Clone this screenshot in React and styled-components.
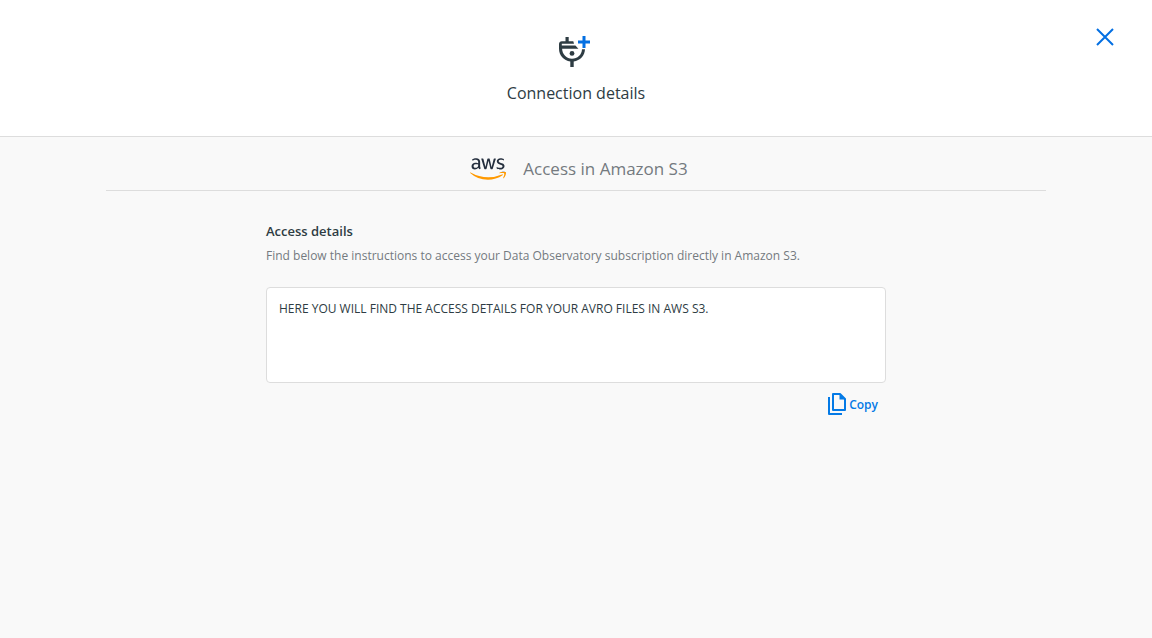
import React, { useRef } from "react";
import styled, { createGlobalStyle } from "styled-components";
import { FaAws } from "react-icons/fa";

const colors = {
  text: "#2e3c43",
  muted: "#747a7f",
  blue: "#036fe2",
  action: "#047ae6",
  border: "#dddddd",
  page: "#f9f9f9",
};

const GlobalStyle = createGlobalStyle`
  *, *::before, *::after { box-sizing: border-box; }
  body {
    margin: 0;
    background: ${colors.page};
    color: ${colors.text};
    font-family: "Open Sans", sans-serif;
  }
`;

const Header = styled.header`
  display: grid;
  grid-template-columns: 1fr auto 1fr;
  padding: 24px 36px 31px;
  background: #fff;
  border-bottom: 1px solid ${colors.border};
`;

const HeaderCenter = styled.div`
  grid-column: 2;
  display: flex;
  flex-direction: column;
  align-items: center;
  gap: 13px;
  padding-top: 12px;
`;

const Title = styled.h1`
  margin: 0;
  font-size: 16px;
  font-weight: 400;
  line-height: 24px;
`;

const CloseButton = styled.button`
  justify-self: end;
  align-self: start;
  display: flex;
  padding: 2px 0;
  border: 0;
  background: none;
  color: ${colors.blue};
  cursor: pointer;
`;

const Main = styled.main`
  max-width: 940px;
  margin: 0 auto;
`;

const Provider = styled.div`
  display: flex;
  align-items: center;
  justify-content: center;
  gap: 17px;
  height: 54px;
  padding: 10px 0 0 6px;
  border-bottom: 1px solid ${colors.border};
`;

const AwsLogo = styled(FaAws)`
  width: 36px;
  height: 30px;
  path { fill: url(#aws-colors); }
`;

const GradientDefs = styled.svg`
  position: absolute;
`;

const ProviderName = styled.h2`
  margin: 0;
  color: ${colors.muted};
  font-size: 17px;
  font-weight: 400;
  line-height: 24px;
`;

const Details = styled.section`
  max-width: 620px;
  margin: 0 auto;
  padding-top: 28px;
`;

const DetailsTitle = styled.h3`
  margin: 0 0 3px;
  font-size: 13px;
  font-weight: 600;
  line-height: 24px;
`;

const Description = styled.p`
  margin: 0 0 21px;
  color: ${colors.muted};
  font-size: 12px;
  line-height: 20px;
`;

const Instructions = styled.textarea`
  display: block;
  width: 100%;
  height: 96px;
  padding: 11px 12px;
  border: 1px solid ${colors.border};
  border-radius: 4px;
  outline: 0;
  resize: none;
  background: #fff;
  color: ${colors.text};
  font: 400 12px/20px "Open Sans", sans-serif;
`;

const Actions = styled.div`
  display: flex;
  justify-content: flex-end;
  padding: 10px 8px;
`;

const CopyButton = styled.button`
  display: flex;
  align-items: center;
  gap: 2px;
  padding: 0;
  border: 0;
  background: none;
  color: ${colors.action};
  font: 600 12px/24px "Open Sans", sans-serif;
  cursor: pointer;
`;

function ConnectionIcon() {
  return (
    <svg width="36" height="32" viewBox="0 0 36 32" fill="none" aria-hidden="true">
      <path d="M7.5 1h3.2v4.2h4.6L16 7.8H3.8v1.700h13.600l3 3.200H4.100c.2 5.600 4.400 10 9.900 10s9.800-4 10-9.500H27c-.2 6.200-4.900 11.400-11.300 12.300V31h-3.400v-5.500C5.800 24.700 1 19.400 1 12.800V8c0-1.700 1.200-2.800 2.800-2.800h3.700z" fill={colors.text} />
      <circle cx="14" cy="17.400" r="2.400" fill={colors.text} />
      <path d="M26 0v12M20 6h12" stroke={colors.blue} strokeWidth="3" />
    </svg>
  );
}

function CloseIcon() {
  return (
    <svg width="22" height="22" viewBox="0 0 22 22" fill="none" aria-hidden="true">
      <path d="M3 3l16 16M19 3L3 19" stroke="currentColor" strokeWidth="2" />
    </svg>
  );
}

function CopyIcon() {
  return (
    <svg width="20" height="24" viewBox="0 0 20 24" fill="none" aria-hidden="true">
      <path d="M6 1h7l5 5v11H6zM2 4v17H15" stroke="currentColor" strokeWidth="2" strokeLinejoin="round" />
      <path d="M12.500 1v5.500H18z" fill="currentColor" />
    </svg>
  );
}

export default function App() {
  const field = useRef(null);

  const copy = () => {
    field.current.select();
    navigator.clipboard?.writeText(field.current.value);
  };

  return (
    <>
      <GlobalStyle />
      <GradientDefs width="0" height="0" aria-hidden="true">
        <linearGradient id="aws-colors" x1="0" y1="0" x2="0" y2="1">
          <stop offset="0.620" stopColor="#252f3e" />
          <stop offset="0.620" stopColor="#ff9900" />
        </linearGradient>
      </GradientDefs>
      <Header>
        <HeaderCenter>
          <ConnectionIcon />
          <Title>Connection details</Title>
        </HeaderCenter>
        <CloseButton type="button" aria-label="Close">
          <CloseIcon />
        </CloseButton>
      </Header>
      <Main>
        <Provider>
          <AwsLogo aria-label="AWS" />
          <ProviderName>Access in Amazon S3</ProviderName>
        </Provider>
        <Details>
          <DetailsTitle id="details-title">Access details</DetailsTitle>
          <Description>
            Find below the instructions to access your Data Observatory subscription directly in Amazon S3.
          </Description>
          <Instructions
            ref={field}
            readOnly
            aria-labelledby="details-title"
            defaultValue="HERE YOU WILL FIND THE ACCESS DETAILS FOR YOUR AVRO FILES IN AWS S3."
          />
          <Actions>
            <CopyButton type="button" onClick={copy}>
              <CopyIcon />
              Copy
            </CopyButton>
          </Actions>
        </Details>
      </Main>
    </>
  );
}
